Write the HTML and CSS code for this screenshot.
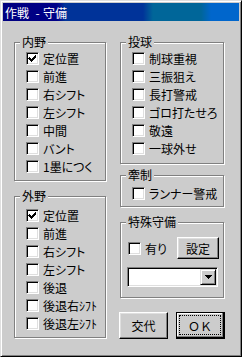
FILE: index.html
```html
<!DOCTYPE html>
<html lang="ja">
<head>
<meta charset="utf-8">
<title>作戦 - 守備</title>
<link rel="stylesheet" href="styles.css">
</head>
<body>
<div class="window">
  <div class="titlebar"><span class="title">作戦<span class="dash">-</span>守備</span></div>
  <div class="client">
    <div class="col col-left">
      <div class="group g-infield">
        <span class="group-label">内野</span>
        <div class="row"><span class="cb"><svg width="13" height="13" viewBox="0 0 13 13"><path d="M3 5h1v1h1v1h1v-1h1v-1h1v-1h1v-1h1v3h-1v1h-1v1h-1v1h-1v1h-1v-1h-1v-1h-1v-1h-1z"/></svg></span><span class="lbl">定位置</span></div>
        <div class="row"><span class="cb"></span><span class="lbl">前進</span></div>
        <div class="row"><span class="cb"></span><span class="lbl">右シフト</span></div>
        <div class="row"><span class="cb"></span><span class="lbl">左シフト</span></div>
        <div class="row"><span class="cb"></span><span class="lbl">中間</span></div>
        <div class="row"><span class="cb"></span><span class="lbl">バント</span></div>
        <div class="row"><span class="cb"></span><span class="lbl">1墨につく</span></div>
      </div>
      <div class="group g-outfield">
        <span class="group-label">外野</span>
        <div class="row"><span class="cb"><svg width="13" height="13" viewBox="0 0 13 13"><path d="M3 5h1v1h1v1h1v-1h1v-1h1v-1h1v-1h1v3h-1v1h-1v1h-1v1h-1v1h-1v-1h-1v-1h-1v-1h-1z"/></svg></span><span class="lbl">定位置</span></div>
        <div class="row"><span class="cb"></span><span class="lbl">前進</span></div>
        <div class="row"><span class="cb"></span><span class="lbl">右シフト</span></div>
        <div class="row"><span class="cb"></span><span class="lbl">左シフト</span></div>
        <div class="row"><span class="cb"></span><span class="lbl">後退</span></div>
        <div class="row"><span class="cb"></span><span class="lbl">後退右ｼﾌﾄ</span></div>
        <div class="row"><span class="cb"></span><span class="lbl">後退左ｼﾌﾄ</span></div>
      </div>
    </div>
    <div class="col col-right">
      <div class="group g-pitch">
        <span class="group-label">投球</span>
        <div class="row"><span class="cb"></span><span class="lbl">制球重視</span></div>
        <div class="row"><span class="cb"></span><span class="lbl">三振狙え</span></div>
        <div class="row"><span class="cb"></span><span class="lbl">長打警戒</span></div>
        <div class="row"><span class="cb"></span><span class="lbl">ゴロ打たせろ</span></div>
        <div class="row"><span class="cb"></span><span class="lbl">敬遠</span></div>
        <div class="row"><span class="cb"></span><span class="lbl">一球外せ</span></div>
      </div>
      <div class="group g-check">
        <span class="group-label">牽制</span>
        <div class="row"><span class="cb"></span><span class="lbl">ランナー警戒</span></div>
      </div>
      <div class="group g-special">
        <span class="group-label">特殊守備</span>
        <div class="special-top">
          <span class="cb"></span><span class="lbl">有り</span>
          <div class="btn btn-set">設定</div>
        </div>
        <div class="combo">
          <div class="combo-btn"><svg width="7" height="4" viewBox="0 0 7 4"><path d="M0 0h7v1h-1v1h-1v1h-1v1h-1v-1h-1v-1h-1v-1h-1z"/></svg></div>
        </div>
      </div>
      <div class="buttons">
        <div class="btn btn-change">交代</div>
        <div class="btn btn-ok"><span class="focus">ＯＫ</span></div>
      </div>
    </div>
  </div>
</div>
</body>
</html>
```

FILE: styles.css
```css
* { box-sizing: border-box; }
html, body { margin: 0; padding: 0; }
body {
  width: 242px;
  height: 357px;
  overflow: hidden;
  background: #cccccc;
  color: #000;
  font-family: "Noto Sans CJK JP", "Noto Sans", sans-serif;
  font-size: 12px;
  line-height: 13px;
}
.window {
  width: 242px;
  height: 357px;
  background: #cccccc;
  border: 1px solid;
  border-color: #dfdfdf #000 #000 #dfdfdf;
  box-shadow: inset 1px 1px #fff, inset -1px -1px #808080;
  padding: 2px;
  display: flex;
  flex-direction: column;
}
.titlebar {
  height: 18px;
  flex: none;
  display: flex;
  align-items: center;
  padding-left: 2px;
  color: #fff;
  background: linear-gradient(to right,
    #000080 0px, #000088 54px,
    #003399 62px, #003399 140px,
    #006699 150px, #006699 198px,
    #0066cc 208px, #0066cc 236px);
}
.title { white-space: nowrap; }
.dash {
  display: inline-block;
  width: 5px;
  text-align: center;
  margin: 0 3px 0 6px;
}
.client {
  display: flex;
  padding: 21px 0 0 11px;
}
.col { display: flex; flex-direction: column; }
.col-left { width: 92px; }
.col-right { width: 105px; margin-left: 14px; }

.group {
  position: relative;
  border: 1px solid #808080;
  box-shadow: inset 1px 1px #fff, 1px 1px 0 #fff;
}
.col-right .group { width: 104px; }
.group-label {
  position: absolute;
  top: -8px;
  left: 5px;
  padding: 0 2px;
  background: #cccccc;
  white-space: nowrap;
  line-height: 13px;
}

.g-infield { padding: 9px 0 2px 11px; }
.g-outfield { margin-top: 15px; padding: 12px 0 2px 11px; }
.g-pitch { padding: 9px 0 3px 11px; }
.g-check { margin-top: 11px; padding: 11px 0 1px 11px; }
.g-special { margin-top: 15px; padding: 14px 4px 10px 6px; }

.row {
  display: flex;
  align-items: flex-start;
  height: 18px;
}
.cb {
  flex: none;
  width: 13px;
  height: 13px;
  background: #fff;
  border: 1px solid;
  border-color: #808080 #fff #fff #808080;
  box-shadow: inset 1px 1px #000, inset -1px -1px #dfdfdf;
}
.cb svg {
  display: block;
  margin: -1px 0 0 -1px;
  shape-rendering: crispEdges;
  fill: #000;
}
.lbl {
  margin-left: 4px;
  white-space: nowrap;
  font-feature-settings: "palt";
}

.special-top {
  display: flex;
  align-items: center;
  height: 22px;
}
.special-top .cb { margin-left: 1px; }
.btn {
  display: flex;
  align-items: center;
  justify-content: center;
  background: #cccccc;
  border: 1px solid;
  border-color: #fff #000 #000 #fff;
  box-shadow: inset -1px -1px #808080, inset 1px 1px #dfdfdf;
  white-space: nowrap;
}
.btn-set {
  margin-left: auto;
  width: 42px;
  height: 22px;
}
.combo {
  margin-top: 8px;
  width: 91px;
  height: 20px;
  background: #fff;
  border: 1px solid;
  border-color: #808080 #fff #fff #808080;
  box-shadow: inset 1px 1px #000, inset -1px -1px #dfdfdf;
  padding: 1px;
  display: flex;
  justify-content: flex-end;
}
.combo-btn {
  width: 16px;
  height: 16px;
  background: #cccccc;
  border: 1px solid;
  border-color: #dfdfdf #000 #000 #dfdfdf;
  box-shadow: inset 1px 1px #fff, inset -1px -1px #808080;
  display: flex;
  align-items: center;
  justify-content: center;
}
.combo-btn svg { display: block; shape-rendering: crispEdges; fill: #000; }

.buttons {
  display: flex;
  margin: 14px 0 0 -1px;
  gap: 8px;
}
.btn-change { width: 49px; height: 27px; }
.btn-ok {
  width: 49px;
  height: 27px;
  border: 1px solid #000;
  box-shadow: inset -1px -1px #000, inset -2px -2px #808080, inset 1px 1px #fff;
  padding: 2px 3px 3px 2px;
  align-items: stretch;
}
.focus {
  flex: 1;
  display: flex;
  align-items: center;
  justify-content: center;
  border: 1px dotted #000;
}
```
